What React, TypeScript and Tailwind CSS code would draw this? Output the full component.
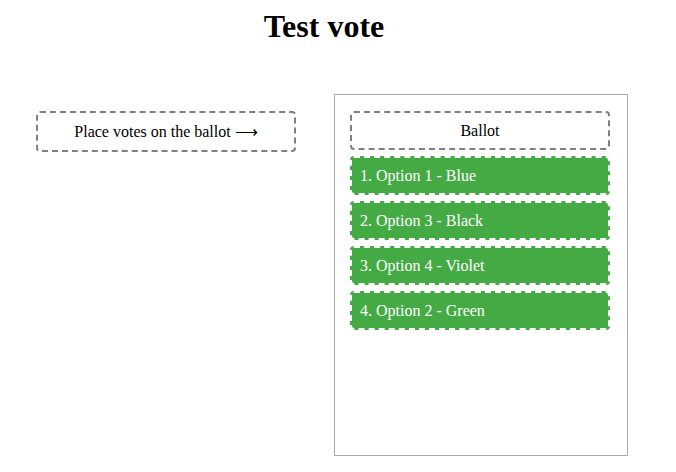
const options = [
  "Option 1 - Blue",
  "Option 3 - Black",
  "Option 4 - Violet",
  "Option 2 - Green",
];

export default function App() {
  return (
    <div className="min-h-[472px] bg-white pt-2 font-['Liberation_Serif',serif] text-base text-black">
      <h1 className="w-[648px] text-center text-[32px] leading-[37px] font-bold">
        Test vote
      </h1>
      <div className="mt-[49px] flex gap-[38px] pl-9">
        <div className="mt-[17px] flex h-[41px] w-[260px] items-center justify-center rounded border-2 border-dashed border-[#808080]">
          Place votes on the ballot ⟶
        </div>
        <div className="flex h-[362px] w-[294px] flex-col border border-[#aaaaaa] pt-4 pr-[17px] pl-[15px]">
          <div className="flex h-[39px] items-center justify-center rounded border-2 border-dashed border-[#808080]">
            Ballot
          </div>
          <div className="mt-[6px] flex flex-col gap-[6px]">
            {options.map((opt, i) => (
              <div
                key={opt}
                className="flex h-[39px] items-center rounded border-2 border-dashed border-white bg-[#44aa44] px-2 text-white"
              >
                {i + 1}. {opt}
              </div>
            ))}
          </div>
        </div>
      </div>
    </div>
  );
}
